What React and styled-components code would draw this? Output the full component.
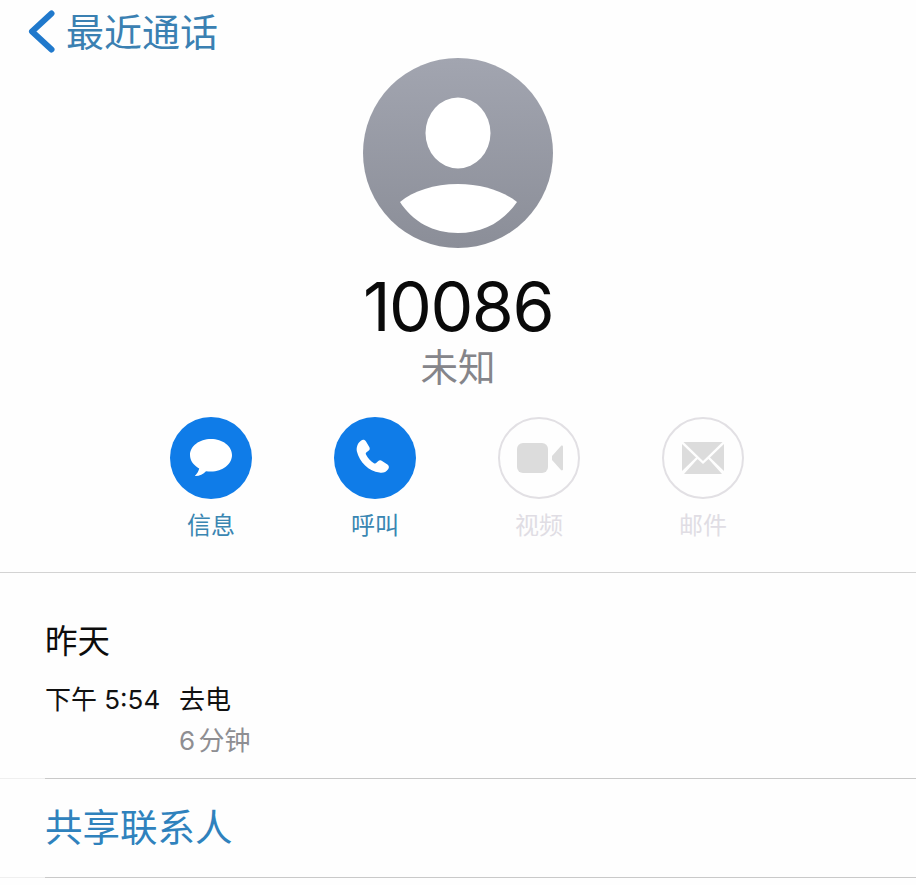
import React from 'react'
import styled, { createGlobalStyle } from 'styled-components'

const GlobalStyle = createGlobalStyle`
  html, body {
    margin: 0;
    padding: 0;
    background: #fefefe;
  }
  body {
    font-family: 'Inter', 'Noto Sans CJK SC', sans-serif;
  }
`

const Page = styled.div`
  width: 916px;
  height: 885px;
  overflow: hidden;
  background: #fefefe;
  display: flex;
  flex-direction: column;
`

const BackBar = styled.div`
  height: 58px;
  display: flex;
  align-items: flex-start;
  gap: 11px;
  padding: 10px 0 0 28px;
  box-sizing: border-box;
`

const BackLabel = styled.span`
  font-size: 38px;
  line-height: 44px;
  color: #3a80b2;
`

const Profile = styled.div`
  display: flex;
  flex-direction: column;
  align-items: center;
`

const Number = styled.div`
  margin-top: 18px;
  font-size: 68px;
  line-height: 80px;
  letter-spacing: -1.5px;
  color: #0a0a0a;
`

const Subtitle = styled.div`
  font-size: 37.5px;
  line-height: 44px;
  color: #85858a;
`

const Actions = styled.div`
  margin-top: 27px;
  padding-left: 170px;
  display: flex;
  gap: 82px;
`

const Action = styled.div`
  width: 82px;
  display: flex;
  flex-direction: column;
  align-items: center;
  gap: 13px;
`

const Circle = styled.div`
  width: 82px;
  height: 82px;
  border-radius: 50%;
  box-sizing: border-box;
  display: flex;
  align-items: center;
  justify-content: center;
  background: ${p => (p.$off ? 'transparent' : '#0f7ce8')};
  border: ${p => (p.$off ? '2px solid #e2e0e4' : 'none')};
`

const ActionLabel = styled.span`
  font-size: 24px;
  line-height: 28px;
  white-space: nowrap;
  color: ${p => (p.$off ? '#e0dde4' : '#3a86b2')};
`

const Rule = styled.div`
  height: 1px;
  background: ${p =>
    p.$inset
      ? 'linear-gradient(to right, #efefef 0, #efefef 45px, #c9c9c9 45px)'
      : '#d3d3d3'};
  margin-top: ${p => p.$top}px;
`

const History = styled.div`
  padding: 50px 0 0 45px;
`

const DayLabel = styled.div`
  font-size: 32.5px;
  line-height: 38px;
  color: #0c0c0c;
`

const CallRow = styled.div`
  margin-top: 23px;
  display: grid;
  grid-template-columns: 134px auto;
  justify-content: start;
  row-gap: 10px;
  font-size: 26px;
  line-height: 31px;
  color: #111;
`

const Duration = styled.span`
  grid-column: 2;
  word-spacing: -4px;
  color: #8e8e92;
`

const ShareLink = styled.div`
  padding: 27px 0 0 45px;
  font-size: 37.5px;
  line-height: 44px;
  color: #2f82bd;
`

const Avatar = () => (
  <svg width="190" height="190" viewBox="0 0 190 190">
    <defs>
      <linearGradient id="avatarFill" x1="0" y1="0" x2="0" y2="1">
        <stop offset="0" stopColor="#a2a5b0" />
        <stop offset="1" stopColor="#8b8e98" />
      </linearGradient>
    </defs>
    <circle cx="95" cy="95" r="95" fill="url(#avatarFill)" />
    <ellipse cx="95" cy="75" rx="32.5" ry="35.5" fill="#fff" />
    <path d="M37 144C50 133 71 126 95 126s45 7 59 18C140 164 120 175 95 175s-45-11-58-31Z" fill="#fff" />
  </svg>
)

const MessageIcon = () => (
  <svg width="44" height="40" viewBox="0 0 44 40">
    <path d="M22 1C10.4 1 1 8 1 17c0 5.600 3.600 10.500 9.200 13.400-.6 2.800-2.200 5-4.400 7.600 4.200.2 8.400-1.400 11.200-4.800 1.600.3 3.200.4 5 .4 11.600 0 21-7.500 21-16.600C43 8 33.600 1 22 1Z" fill="#fff" />
  </svg>
)

const PhoneIcon = () => (
  <svg width="38" height="39" viewBox="0 0 35 36">
    <path d="M4.500 1.500c1.800-1.200 3.600-.9 4.700.8l3 5c.8 1.400.5 2.700-.7 3.600l-1.800 1.300c-.8.6-.9 1.400-.4 2.300 1.700 3.300 4 5.800 7.200 7.800.9.5 1.600.4 2.300-.3l1.500-1.500c1.100-1.100 2.400-1.200 3.700-.3l5 3.300c1.500 1 1.800 2.800.6 4.400-1.900 2.600-4.800 3.900-8 3.100C12 30 3 21 .8 11.500 0 7.800 1.500 3.600 4.500 1.500Z" fill="#fff" />
  </svg>
)

const VideoIcon = () => (
  <svg width="48" height="32" viewBox="-2 0 48 32">
    <rect x="0" y="1" width="31" height="30" rx="6" fill="#dcdcdc" />
    <path d="M35 14 44 4c.8-.8 2-.3 2 .8v22.400c0 1.100-1.200 1.600-2 .8L35 18Z" fill="#dcdcdc" />
  </svg>
)

const MailIcon = () => (
  <svg width="42" height="32" viewBox="0 0 42 32">
    <path d="M1.500 0h39L21 19Z" fill="#dcdcdc" />
    <path d="M0 2v27l14-13.500Z" fill="#dcdcdc" />
    <path d="M42 2v27L28 15.500Z" fill="#dcdcdc" />
    <path d="M2 32 15.500 17 21 22l5.500-5L40 32Z" fill="#dcdcdc" />
  </svg>
)

const Chevron = () => (
  <svg width="27" height="43" viewBox="0 0 27 43">
    <path d="M23.500 3.500 4 21.500l19.500 18" fill="none" stroke="#2079cc" strokeWidth="6" strokeLinecap="round" strokeLinejoin="round" />
  </svg>
)

const actions = [
  { label: '信息', icon: <MessageIcon /> },
  { label: '呼叫', icon: <PhoneIcon /> },
  { label: '视频', icon: <VideoIcon />, off: true },
  { label: '邮件', icon: <MailIcon />, off: true },
]

const App = () => {
  return (
    <Page>
      <GlobalStyle />
      <BackBar>
        <Chevron />
        <BackLabel>最近通话</BackLabel>
      </BackBar>
      <Profile>
        <Avatar />
        <Number>10086</Number>
        <Subtitle>未知</Subtitle>
      </Profile>
      <Actions>
        {actions.map(a => (
          <Action key={a.label}>
            <Circle $off={a.off}>{a.icon}</Circle>
            <ActionLabel $off={a.off}>{a.label}</ActionLabel>
          </Action>
        ))}
      </Actions>
      <Rule $top={32} />
      <History>
        <DayLabel>昨天</DayLabel>
        <CallRow>
          <span>下午 5:54</span>
          <span>去电</span>
          <Duration>6 分钟</Duration>
        </CallRow>
      </History>
      <Rule $top={22} $inset />
      <ShareLink>共享联系人</ShareLink>
      <Rule $top={27} $inset />
    </Page>
  )
}

export default App
